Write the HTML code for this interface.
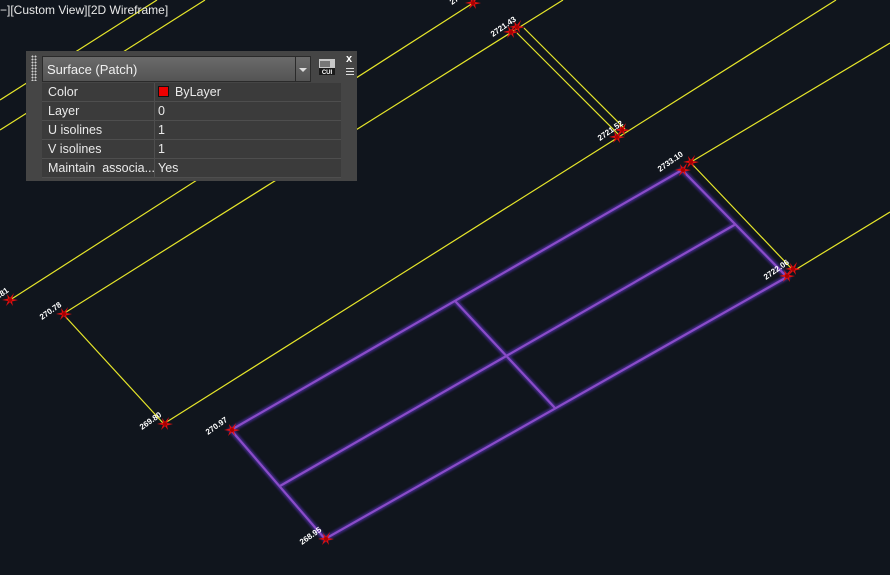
<!DOCTYPE html>
<html><head><meta charset="utf-8"><style>
html,body{margin:0;padding:0;width:890px;height:575px;overflow:hidden;background:#10151d;font-family:"Liberation Sans",sans-serif}
svg{position:absolute;left:0;top:0}
.t{position:absolute;left:0;top:3px;color:#e8e8e8;font-size:12px;white-space:nowrap}
.panel{position:absolute;left:26px;top:51px;width:331px;height:130px;background:#454545}
.grip{position:absolute;left:5px;top:4px;width:6px;height:26px;background-image:radial-gradient(circle,#cfcfcf 0.9px,transparent 1.1px);background-size:3px 3px}
.dd{position:absolute;left:16px;top:5px;height:26px;border:1px solid #2a2a2a;background:linear-gradient(#6a6a6a,#545454);color:#f0f0f0;font-size:13px;line-height:26px;padding-left:4px;box-sizing:border-box;width:269px}
.dd .ar{position:absolute;right:0;top:0;width:14px;height:24px;border-left:1px solid #2a2a2a;}
.dd .ar:after{content:"";position:absolute;left:3px;top:11px;border-left:4px solid transparent;border-right:4px solid transparent;border-top:4px solid #ddd}
.grid{position:absolute;left:16px;top:32px;width:299px}
.row{height:18px;border-bottom:1px solid #4e4e4e;background:#3b3b3b;color:#eaeaea;font-size:12.5px;line-height:19px;position:relative}
.row .k{position:absolute;left:6px}
.row .v{position:absolute;left:112px;top:0;height:18px;border-left:1px solid #4e4e4e;padding-left:3px}
.sq{display:inline-block;width:9px;height:9px;background:#e00;border:1px solid #111;vertical-align:-1px;margin-right:6px}
</style></head><body>
<svg width="890" height="575" viewBox="0 0 890 575">
<defs>
<symbol id="m" viewBox="-8 -8 16 16" overflow="visible">
<polygon points="-8,0 -2,-1.5 -3,-6 0,-2 4,-7 2,-1 8,0 2,1.5 3,6 0,2 -4,6 -2,1" fill="#e01010"/>
<circle r="2" fill="#a00"/>
</symbol>
<filter id="g" x="-5%" y="-5%" width="110%" height="110%"><feGaussianBlur stdDeviation="1"/></filter>
</defs>
<g stroke="#e6e62a" stroke-width="1.2" fill="none">
<line x1="0" y1="100" x2="157" y2="0"/>
<line x1="0" y1="130" x2="205" y2="0"/>
<line x1="10" y1="300" x2="473" y2="3"/>
<line x1="63" y1="314" x2="515" y2="30"/>
<line x1="515" y1="30" x2="563" y2="0"/>
<line x1="165" y1="423" x2="836" y2="0"/>
<line x1="691" y1="162" x2="890" y2="43"/>
<line x1="795" y1="270" x2="890" y2="212"/>
<line x1="63" y1="314" x2="163" y2="423"/>
<line x1="517" y1="33" x2="618" y2="134"/>
<line x1="524" y1="28" x2="625" y2="129"/>
<line x1="691" y1="163" x2="791" y2="268"/>
</g>
<g stroke="#5a34c0" stroke-width="5.5" fill="none" opacity="0.6" filter="url(#g)">
<polygon points="231,430 682,170 787,277 325,539"/>
<line x1="280" y1="486" x2="736" y2="224"/>
<line x1="455" y1="301" x2="555" y2="408"/>
</g>
<g stroke="#8a4cc8" stroke-width="2.2" fill="none">
<polygon points="231,430 682,170 787,277 325,539"/>
<line x1="280" y1="486" x2="736" y2="224"/>
<line x1="455" y1="301" x2="555" y2="408"/>
</g>
<g>
<use href="#m" x="2" y="292" width="16" height="16"/>
<use href="#m" x="56" y="306" width="16" height="16"/>
<use href="#m" x="157" y="416" width="16" height="16"/>
<use href="#m" x="224" y="422" width="16" height="16"/>
<use href="#m" x="318" y="531" width="16" height="16"/>
<use href="#m" x="465" y="-5" width="16" height="16"/>
<use href="#m" x="509" y="19" width="16" height="16"/>
<use href="#m" x="503" y="24" width="16" height="16"/>
<use href="#m" x="614" y="122" width="16" height="16"/>
<use href="#m" x="609" y="129" width="16" height="16"/>
<use href="#m" x="683" y="154" width="16" height="16"/>
<use href="#m" x="675" y="162" width="16" height="16"/>
<use href="#m" x="785" y="261" width="16" height="16"/>
<use href="#m" x="779" y="268" width="16" height="16"/>
</g>
<g fill="#fff" font-family="Liberation Sans, sans-serif" font-size="8" font-weight="bold">
<text transform="translate(0,298) rotate(-35)">.81</text>
<text transform="translate(42,320) rotate(-35)">270.78</text>
<text transform="translate(142,430) rotate(-35)">269.80</text>
<text transform="translate(208,435) rotate(-35)">270.97</text>
<text transform="translate(302,545) rotate(-35)">268.95</text>
<text transform="translate(452,5) rotate(-35)">27</text>
<text transform="translate(493,37) rotate(-35)">2721.43</text>
<text transform="translate(600,141) rotate(-35)">2721.52</text>
<text transform="translate(660,172) rotate(-35)">2733.10</text>
<text transform="translate(766,280) rotate(-35)">2722.06</text>
</g>
</svg>
<div class="t">−][Custom View][2D Wireframe]</div>
<div class="panel">
<div class="grip"></div>
<div class="dd">Surface (Patch)<div class="ar"></div></div>
<svg style="left:292px;top:7px" width="18" height="18" viewBox="0 0 18 18">
<rect x="1" y="1" width="16" height="16" fill="#c8c8c8"/>
<rect x="2" y="3" width="10" height="6" fill="#777"/>
<rect x="1" y="10" width="16" height="7" fill="#1a1a1a"/>
<text x="9" y="16" font-size="6" fill="#fff" text-anchor="middle" font-family="Liberation Sans, sans-serif" font-weight="bold">CUI</text>
</svg>
<div style="position:absolute;left:320px;top:2px;color:#fff;font-size:11px;font-weight:bold">x</div>
<div style="position:absolute;left:320px;top:17px;width:8px;height:1px;background:#ddd;box-shadow:0 3px 0 #ddd,0 6px 0 #ddd"></div>
<div class="grid">
<div class="row"><span class="k">Color</span><span class="v"><span class="sq"></span>ByLayer</span></div>
<div class="row"><span class="k">Layer</span><span class="v">0</span></div>
<div class="row"><span class="k">U isolines</span><span class="v">1</span></div>
<div class="row"><span class="k">V isolines</span><span class="v">1</span></div>
<div class="row"><span class="k">Maintain&nbsp; associa...</span><span class="v">Yes</span></div>
</div>
</div>
</body></html>
